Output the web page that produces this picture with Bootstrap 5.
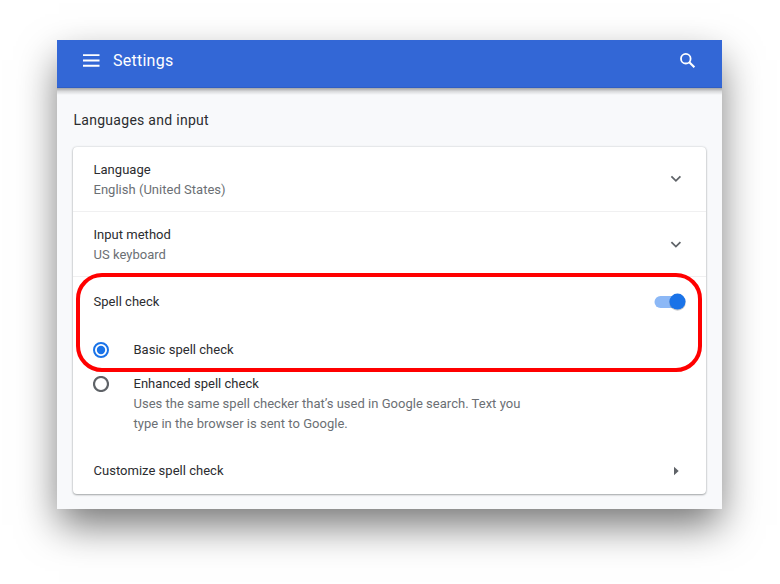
<!DOCTYPE html>
<html lang="en">
<head>
<meta charset="utf-8">
<meta name="viewport" content="width=device-width, initial-scale=1">
<title>Settings</title>
<link rel="stylesheet" href="https://cdn.jsdelivr.net/npm/bootstrap@5.3.0/dist/css/bootstrap.min.css">
<style>
body{background:#fff;font-family:Roboto,"Liberation Sans",sans-serif;font-size:13px;line-height:20px;letter-spacing:.02px;color:#2b2c2f;height:584px;padding:40px 0 0 57px}
.window{width:665px;height:469px;background:#f8f9fb;box-shadow:0 18px 38px -2px rgba(0,0,0,.55)}
.topbar{height:48px;background:#3367d6;color:#fff;padding:0 26px 7px;box-shadow:inset 0 -1px 0 rgba(0,0,0,.08)}
.topbar::after{content:"";position:absolute;left:0;right:0;top:48px;height:7px;background:linear-gradient(rgba(0,0,0,.34),rgba(0,0,0,.12) 50%,rgba(0,0,0,0))}
.topbar h1{font-size:16px;font-weight:400;letter-spacing:.25px;margin:0 0 0 13px;line-height:20px}
.section-title{font-size:14px;font-weight:400;letter-spacing:.28px;line-height:20px;margin:0;padding:22px 0 17px .5px}
.panel{height:347px;border:0;border-radius:4px;color:inherit;box-shadow:0 1px 2px rgba(60,64,67,.4),0 0 2px rgba(60,64,67,.25)}
.setting{height:65px;padding:1px 20px 0 20.5px;border-bottom:1px solid #f0f0f1}
.setting .sub,.option .sub{color:#6b6f74}
.setting svg{margin-top:-2px}
.setting+.setting svg{margin-top:1px}
.spell-row{height:49px;padding:1px 20px 0 20.5px}
.toggle{width:32px;height:18px;margin-top:-1px}
.option{padding:0 20px;gap:24.5px}
.option svg{flex:none;margin-top:2px}
.option-first{margin-top:14px}
.option-next{margin-top:14px}
.option-next svg{margin-top:1.5px}
.desc{width:400px}
.last-row{height:47px}
.highlight{position:absolute;left:76px;top:273px;width:626px;height:99px;border:4px solid #f00;border-radius:26px;pointer-events:none}
svg{display:block}
</style>
<script src="https://cdn.jsdelivr.net/npm/bootstrap@5.3.0/dist/js/bootstrap.bundle.min.js"></script>
</head>
<body>
<main class="window d-flex flex-column">
  <header class="topbar d-flex align-items-center position-relative">
    <svg width="17" height="13" viewBox="0 0 17 13" fill="#fff"><path d="M0 .2h16.5V2H0zM0 5.5h16.5v1.9H0zM0 10.8h16.5v1.9H0z"/></svg>
    <h1>Settings</h1>
    <svg class="ms-auto" width="17" height="18" viewBox="0 0 17 18" fill="none" stroke="#fff" stroke-width="1.8"><circle cx="6.8" cy="6.7" r="4.8"/><path d="M10.3 10.2 15.4 15.3" stroke-width="2.1"/></svg>
  </header>
  <div class="px-3">
    <h2 class="section-title">Languages and input</h2>
    <section class="panel card">
      <div class="setting d-flex align-items-center justify-content-between">
        <div><div>Language</div><div class="sub">English (United States)</div></div>
        <svg class="me-1" width="12" height="8" viewBox="0 0 12 8" fill="none" stroke="#5f6368" stroke-width="1.8"><path d="M1.4 1.4 5.9 5.8l4.5-4.4"/></svg>
      </div>
      <div class="setting d-flex align-items-center justify-content-between">
        <div><div>Input method</div><div class="sub">US keyboard</div></div>
        <svg class="me-1" width="12" height="8" viewBox="0 0 12 8" fill="none" stroke="#5f6368" stroke-width="1.8"><path d="M1.4 1.2 5.9 5.6l4.5-4.4"/></svg>
      </div>
      <div class="spell-row d-flex align-items-center justify-content-between">
        <span>Spell check</span>
        <svg class="toggle" viewBox="0 0 32 18" overflow="visible"><rect x=".5" y="3" width="28" height="12" rx="6" fill="#8cb8f6"/><circle cx="23.5" cy="9.4" r="8.3" fill="#000" opacity=".2"/><circle cx="23.5" cy="8.6" r="8" fill="#1a73e8"/></svg>
      </div>
      <div class="option option-first d-flex">
        <svg width="16" height="16" viewBox="0 0 16 16"><circle cx="8" cy="8" r="7" fill="#fff" stroke="#1a73e8" stroke-width="2"/><circle cx="8" cy="8" r="4.2" fill="#1a73e8"/></svg>
        <span>Basic spell check</span>
      </div>
      <div class="option option-next d-flex">
        <svg width="16" height="16" viewBox="0 0 16 16"><circle cx="8" cy="8" r="7" fill="#fff" stroke="#5f6368" stroke-width="2.2"/></svg>
        <div class="desc"><div>Enhanced spell check</div><div class="sub">Uses the same spell checker that’s used in Google search. Text you type in the browser is sent to Google.</div></div>
      </div>
      <div class="spell-row last-row d-flex align-items-center justify-content-between mt-auto">
        <span>Customize spell check</span>
        <svg class="me-1" width="8" height="10" viewBox="0 0 8 10" fill="#5f6368"><path d="M0 .7 4.7 5 0 9.3z"/></svg>
      </div>
    </section>
  </div>
</main>
<div class="highlight"></div>
</body>
</html>
